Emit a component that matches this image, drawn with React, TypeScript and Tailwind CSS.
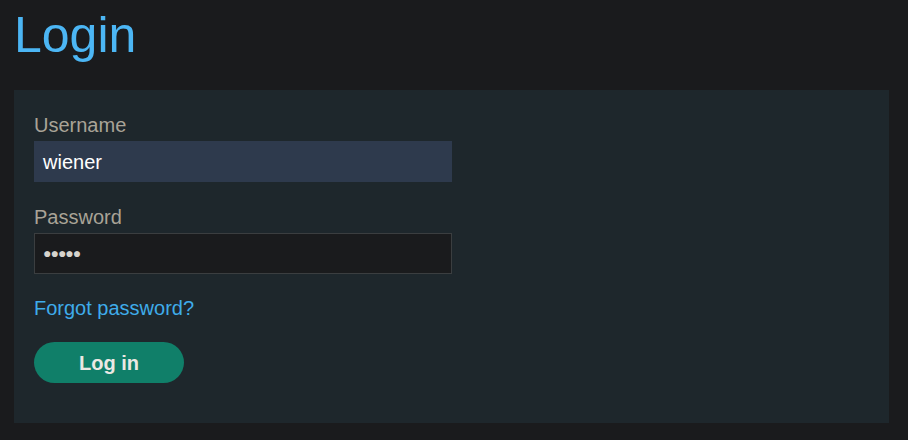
export default function App() {
  return (
    <div className="min-h-[440px] w-full bg-[#1a1b1d] px-[14px] pb-[17px] font-['Liberation_Sans',Arial,sans-serif]">
      <h1 className="h-[90px] pt-[6px] text-[50px] leading-[58px] text-[#4cb6f4]">Login</h1>
      <div className="w-[875px] bg-[#1e272c] pl-[20px] pt-[23px] pb-[40px]">
        <div className="text-[20px] leading-[24px] text-[#a9a397]">Username</div>
        <div className="mt-[4px] flex h-[41px] w-[418px] items-center bg-[#2e3a4d] pl-[9px] text-[20px] text-white">wiener</div>
        <div className="mt-[23px] text-[20px] leading-[24px] text-[#a9a397]">Password</div>
        <div className="mt-[4px] flex h-[41px] w-[418px] items-center border border-[#3b3e40] bg-[#1a1b1d] pl-[8px] text-[14px] tracking-[-1px] text-[#d6d3cd]">●●●●●</div>
        <div className="mt-[22px] text-[20px] leading-[24px] text-[#3facea]">Forgot password?</div>
        <button className="mt-[22px] flex h-[41px] w-[150px] items-center justify-center rounded-full bg-[#107f69] text-[20px] font-bold text-[#ebe8e3]">Log in</button>
      </div>
    </div>
  );
}
